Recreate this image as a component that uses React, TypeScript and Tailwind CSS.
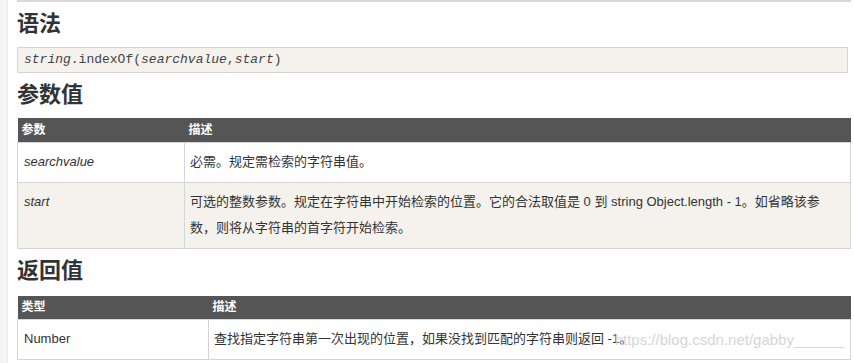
const params = [
  {
    name: "searchvalue",
    desc: ["必需。规定需检索的字符串值。"],
  },
  {
    name: "start",
    desc: [
      "可选的整数参数。规定在字符串中开始检索的位置。它的合法取值是 0 到 string Object.length - 1。如省略该参",
      "数，则将从字符串的首字符开始检索。",
    ],
  },
];

const font = "font-['Liberation_Sans','Noto_Sans_CJK_SC',sans-serif]";

const Heading = ({ children, className = "" }: { children: React.ReactNode; className?: string }) => (
  <h2 className={`flex items-center text-[22px] font-bold leading-none text-[#333] ${className}`}>
    {children}
  </h2>
);

const App = () => {
  return (
    <div className={`flex min-h-[363px] w-[854px] bg-white ${font}`}>
      {/* left page gutter */}
      <div className="w-[8px] shrink-0 border-r border-[#ececec] bg-[#f5f5f5]" />

      <div className="relative ml-[9px] w-[834px]">
        <div className="h-[2px] bg-[#d9d9d9]" />

        <Heading className="h-[45px] pb-[1px]">语法</Heading>
        <div className="mr-[3px] h-[26px] border border-[#d5d5d5] bg-[#f5f2ed] px-[6px] font-['Liberation_Mono',monospace] text-[13px] leading-[24px] text-[#444]">
          <i>string</i>.indexOf(<i>searchvalue</i>,<i>start</i>)
        </div>

        <Heading className="h-[45px] pb-[2px]">参数值</Heading>
        <table className="w-full border-collapse text-[13px] text-[#333]">
          <thead>
            <tr className="bg-[#555] text-left text-[12px] font-bold text-white">
              <th className="h-[24px] w-[167px] px-[4px] py-0">参数</th>
              <th className="h-[24px] px-[4px] py-0">描述</th>
            </tr>
          </thead>
          <tbody>
            {params.map((p, i) => (
              <tr key={p.name} className={i % 2 ? "bg-[#f5f2ed]" : "bg-white"}>
                <td className="border border-[#d5d5d5] px-[6px] pt-[6px] pb-[7px] align-top leading-[26px] italic">
                  {p.name}
                </td>
                <td className="border border-[#d5d5d5] px-[5px] pt-[6px] pb-[7px] align-top leading-[26px]">
                  {p.desc.map((line) => (
                    <div key={line}>{line}</div>
                  ))}
                </td>
              </tr>
            ))}
          </tbody>
        </table>

        <Heading className="h-[47px] pb-[2px]">返回值</Heading>
        <table className="w-full border-collapse text-[13px] text-[#333]">
          <thead>
            <tr className="bg-[#555] text-left text-[12px] font-bold text-white">
              <th className="h-[24px] w-[191px] px-[4px] py-0">类型</th>
              <th className="h-[24px] px-[4px] py-0">描述</th>
            </tr>
          </thead>
          <tbody>
            <tr className="bg-white">
              <td className="border border-[#d5d5d5] px-[6px] pt-[6px] pb-[7px] align-top leading-[26px]">Number</td>
              <td className="border border-[#d5d5d5] px-[5px] pt-[6px] pb-[7px] align-top leading-[26px]">
                查找指定字符串第一次出现的位置，如果没找到匹配的字符串则返回 -1。
              </td>
            </tr>
          </tbody>
        </table>

        {/* blog watermark, laid over the last row */}
        <span className="pointer-events-none absolute right-[7px] top-[329px] text-[15px] text-[#d6d6d6]">
          https://blog.csdn.net/gabby______
        </span>
      </div>
    </div>
  );
};

export default App;
